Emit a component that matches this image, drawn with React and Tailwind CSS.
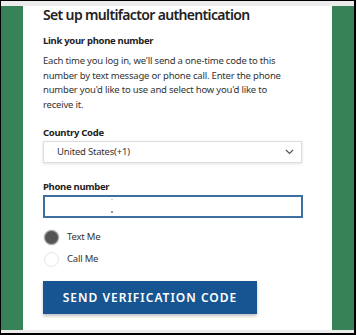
const RadioOption = ({ label, checked }) => {
  return (
    <label className="flex items-center gap-[8px] h-[22px] pl-[1px]">
      {checked ? (
        <span className="w-[15px] h-[15px] rounded-full bg-[#555555] border border-[#bbbbbb] shadow-[0_0_1px_#888]"></span>
      ) : (
        <span className="w-[15px] h-[15px] rounded-full bg-white border border-[#e6e6e6]"></span>
      )}
      <span className="text-[9.5px] tracking-[-0.2px] text-[#333333]">{label}</span>
    </label>
  );
};

const App = () => {
  return (
    <div className="w-[357px] h-[335px] bg-white font-['Noto_Sans',sans-serif]">
      <div className="w-[356px] h-[335px] flex flex-col border-l border-t border-r-2 border-b-2 border-black">
        <div className="h-[5px] bg-[#ececec]"></div>
        <div className="flex flex-1">
          <div className="w-[22px] bg-[#378256]"></div>
          <div className="w-[309px] bg-white px-[20px] overflow-hidden">
            <h1 className="text-[14px] leading-[17px] font-semibold text-[#222222] tracking-[-0.65px] whitespace-nowrap">
              Set up multifactor authentication
            </h1>
            <h2 className="mt-[11px] text-[9.5px] leading-[14px] font-bold text-[#222222] tracking-[-0.3px]">
              Link your phone number
            </h2>
            <p className="mt-[6px] w-[240px] text-[9.5px] leading-[14.5px] text-[#333333] tracking-[-0.2px]">
              Each time you log in, we'll send a one-time code to this number by
              text message or phone call. Enter the phone number you'd like to
              use and select how you'd like to receive it.
            </p>

            <div className="mt-[14px] text-[9.5px] leading-[14px] font-bold text-[#222222] tracking-[-0.3px]">
              Country Code
            </div>
            <div className="mt-[1px] h-[22px] w-[259px] border border-[#dddddd] shadow-[0_1px_3px_rgba(0,0,0,0.12)] flex items-center justify-between pl-[13px] pr-[7px]">
              <span className="text-[9.5px] tracking-[-0.2px] text-[#333333]">United States(+1)</span>
              <svg width="9" height="6" viewBox="0 0 9 6">
                <path d="M1 1 L4.5 4.5 L8 1" fill="none" stroke="#555" strokeWidth="1.2" />
              </svg>
            </div>

            <div className="mt-[17px] text-[9.5px] leading-[14px] font-bold text-[#222222] tracking-[-0.3px]">
              Phone number
            </div>
            <div className="mt-[1px] h-[23px] w-[260px] border-2 border-[#3e6fa3] relative">
              <span className="absolute left-[66px] top-[2px] w-[2px] h-[1px] bg-[#cccccc]"></span>
              <span className="absolute left-[66px] top-[14px] w-[2px] h-[2px] bg-[#999999]"></span>
            </div>

            <div className="mt-[8px] flex flex-col">
              <RadioOption label="Text Me" checked />
              <RadioOption label="Call Me" />
            </div>

            <button className="mt-[11px] w-[214px] h-[33px] bg-[#165591] text-white text-[12px] font-semibold tracking-[1px] shadow-[0_2px_3px_rgba(0,0,0,0.25)]">
              SEND VERIFICATION CODE
            </button>
          </div>
          <div className="w-[22px] bg-[#378256]"></div>
        </div>
        <div className="h-[3px] bg-[#ececec]"></div>
      </div>
    </div>
  );
};

export default App;
